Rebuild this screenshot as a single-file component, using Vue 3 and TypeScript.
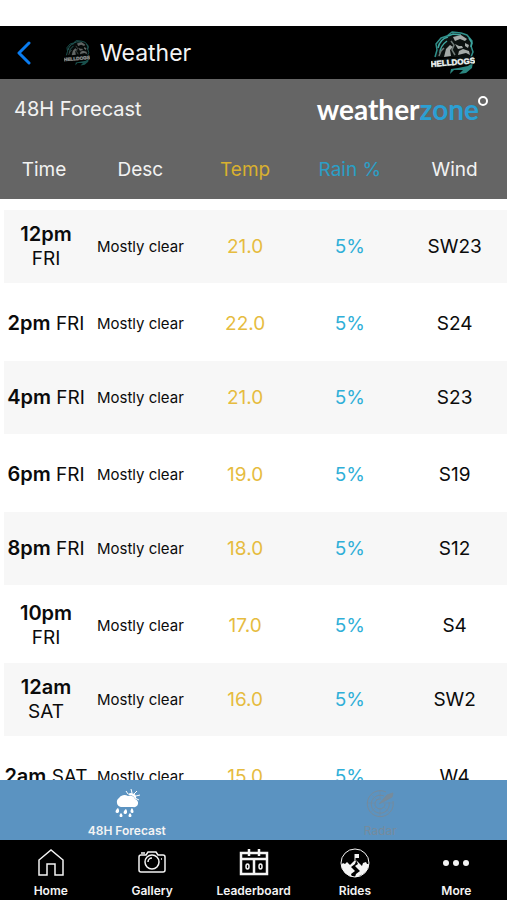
<script setup lang="ts">
import { defineComponent, h } from 'vue'

interface Forecast {
  hour: string
  day: string
  desc: string
  temp: string
  rain: string
  wind: string
}

const forecasts: Forecast[] = [
  { hour: '12pm', day: 'FRI', desc: 'Mostly clear', temp: '21.0', rain: '5%', wind: 'SW23' },
  { hour: '2pm', day: 'FRI', desc: 'Mostly clear', temp: '22.0', rain: '5%', wind: 'S24' },
  { hour: '4pm', day: 'FRI', desc: 'Mostly clear', temp: '21.0', rain: '5%', wind: 'S23' },
  { hour: '6pm', day: 'FRI', desc: 'Mostly clear', temp: '19.0', rain: '5%', wind: 'S19' },
  { hour: '8pm', day: 'FRI', desc: 'Mostly clear', temp: '18.0', rain: '5%', wind: 'S12' },
  { hour: '10pm', day: 'FRI', desc: 'Mostly clear', temp: '17.0', rain: '5%', wind: 'S4' },
  { hour: '12am', day: 'SAT', desc: 'Mostly clear', temp: '16.0', rain: '5%', wind: 'SW2' },
  { hour: '2am', day: 'SAT', desc: 'Mostly clear', temp: '15.0', rain: '5%', wind: 'W4' },
]

// Team crest, used at two sizes in the header.
const TeamCrest = defineComponent({
  setup() {
    return () =>
      h('svg', { viewBox: '0 0 44 44', role: 'img', 'aria-label': 'Helldogs' }, [
        h('path', {
          d: 'M4 26 6 19l-1-6 5-6 6-2 5-4 9 1 6 2 5 6-1 5 2 6-2 5',
          fill: '#0b1110',
          stroke: '#2f8f8a',
          'stroke-width': 1.5,
          'stroke-linejoin': 'round',
        }),
        h('path', {
          d: 'M7 17q2-9 10-11M9 22q0-7 7-12M17 5l5-2 8 1M38 7l3 5-1 4',
          fill: 'none',
          stroke: '#3fa6a0',
          'stroke-width': 1.5,
        }),
        h('path', {
          d: 'M22 6l8-2 6 4-2 2-5-2-5 2zM13 26l2-8 4-4 3 2-3 3 1 6zM24 13l4 2 3 0 1 2-5 1zM34 12l4 2-1 3-3-2zM28 20l4-2 6 2 1 4-4-2-4 1-4 1z',
          fill: '#a4aaa8',
        }),
        h('path', {
          d: 'M20 10l3 4-2 5 3 5M8 25l2-5 3-3',
          fill: 'none',
          stroke: '#6f7a77',
          'stroke-width': 1.5,
        }),
        h('path', { d: 'M27 37l10-2 5-4-1 6-6 5-7 1 4-4-9 0-4 4 1-5z', fill: '#2a857f' }),
        h('path', { d: 'M0 29l43-4 1 8-43 4z', fill: '#0d1514' }),
        h(
          'text',
          {
            x: 0,
            y: 36,
            transform: 'rotate(-5 0 36)',
            'font-family': 'Liberation Sans, sans-serif',
            'font-size': 8,
            'font-weight': 700,
            fill: '#f1f6f4',
            stroke: '#f1f6f4',
            'stroke-width': 0.4,
          },
          'HELLDOGS',
        ),
      ])
  },
})
</script>

<template>
  <div class="screen">
    <header class="topbar">
      <button class="back" type="button" aria-label="Back">
        <svg viewBox="0 0 16 24"><path d="M13 2 3 12l10 10" /></svg>
      </button>
      <TeamCrest class="crest-small" />
      <h1>Weather</h1>
      <TeamCrest class="crest" />
    </header>

    <section class="banner">
      <h2>48H Forecast</h2>
      <p class="brand">
        weather<span>zone</span>
        <svg viewBox="0 0 12 12" aria-hidden="true"><circle cx="6" cy="6" r="4" /></svg>
      </p>
    </section>

    <main class="list">
      <table>
        <colgroup>
          <col class="col-time" />
          <col /><col /><col /><col />
        </colgroup>
        <thead>
          <tr>
            <th scope="col">Time</th>
            <th scope="col">Desc</th>
            <th scope="col" class="temp">Temp</th>
            <th scope="col" class="rain">Rain %</th>
            <th scope="col">Wind</th>
          </tr>
        </thead>
        <tbody>
          <tr v-for="row in forecasts" :key="row.hour + row.day">
            <td class="time"><strong>{{ row.hour }}</strong> {{ row.day }}</td>
            <td class="desc">{{ row.desc }}</td>
            <td class="temp">{{ row.temp }}</td>
            <td class="rain">{{ row.rain }}</td>
            <td>{{ row.wind }}</td>
          </tr>
        </tbody>
      </table>
    </main>

    <nav class="tabs" aria-label="Weather views">
      <a href="#forecast" aria-current="page">
        <svg viewBox="0 0 30 30" fill="#fff">
          <path d="M9 19a5 5 0 0 1-2-9 6 5 0 0 1 9-2 5 5 0 0 1 7 3 4 4 0 0 1-2 8z" />
          <path d="M16 6a5 4 0 0 1 8 4l-1 1a6 6 0 0 0-6-4z" />
          <path d="m19 1 1 4M14 3l2 3M25 3l-3 3M28 7l-4 1M27 12l-4-2" stroke="#fff" stroke-width="1" />
          <path d="M6 20c-3 2-3 5-1 5s3-2 1-5zM14 21c-3 2-3 5-1 5s3-2 1-5zM20 20c-2 2-2 5 0 5s2-2 0-5zM9 25c-2 2-2 4 0 4s2-2 0-4zM18 25c-2 2-2 4 0 4s2-2 0-4z" />
        </svg>
        <span>48H Forecast</span>
      </a>
      <a href="#radar" class="dim">
        <svg viewBox="0 0 30 30" fill="none" stroke="currentColor">
          <path d="M21 4a13 13 0 1 0 7 9M19 8a9 9 0 1 0 5 6M16 11a5 5 0 1 0 4 5" />
          <path d="M2 15h8M15 20v8M15 2v8M6 6l6 6M6 24l5-5M24 24l-5-5M18 15h10" stroke-width="0.500" />
          <path d="m14 16 8-9 6-2-1 4z" fill="currentColor" />
        </svg>
        <span>Radar</span>
      </a>
    </nav>

    <nav class="bottom" aria-label="Main">
      <a href="#home">
        <svg viewBox="0 0 30 30"><path d="M3 27V12L15 2l12 10v15h-8V16h-8v11z" /></svg>
        <span>Home</span>
      </a>
      <a href="#gallery">
        <svg viewBox="0 0 30 30">
          <path d="M4 7h5l2-3h8l2 3h5q2 0 2 2v13q0 2-2 2H4q-2 0-2-2V9q0-2 2-2zM4 5h4" />
          <circle cx="15" cy="14" r="7" />
          <path d="M11 14a4 4 0 0 1 4-4M24 11h1" />
        </svg>
        <span>Gallery</span>
      </a>
      <a href="#leaderboard">
        <svg viewBox="0 0 30 30">
          <path d="M2 5h26v21H2zM2 11h26M15 11v15M10 1v7M20 1v7" stroke-width="2.500" />
          <ellipse cx="8.500" cy="18.500" rx="1.500" ry="2.500" /><ellipse cx="21.500" cy="18.500" rx="1.500" ry="2.500" />
        </svg>
        <span>Leaderboard</span>
      </a>
      <a href="#rides">
        <svg viewBox="0 0 30 30">
          <circle cx="15" cy="15" r="14" stroke-width="1" />
          <path class="solid" d="M1 17l2-2 2 1 2-2 3 3 5-5 1 1-1 3-4 3 4 4-4 3 1 3q-9-3-11-12zM16 12l6 6 1-3 3-1 1 2 2 0q-1 7-6 10l-6 3h-2l1-3 4-3-5-5 3-2z" />
          <path d="M15 12V6" stroke-width="1" /><path class="solid" d="M15 6h4v4h-4z" />
        </svg>
        <span>Rides</span>
      </a>
      <a href="#more">
        <svg viewBox="0 0 30 30">
          <g class="solid"><circle cx="5" cy="15" r="3" /><circle cx="15" cy="15" r="3" /><circle cx="25" cy="15" r="3" /></g>
        </svg>
        <span>More</span>
      </a>
    </nav>
  </div>
</template>

<style>
html,
body,
#app {
  height: 100%;
}
</style>

<style scoped>
.screen {
  display: flex;
  flex-direction: column;
  height: 100%;
  padding-top: 26px;
  box-sizing: border-box;
  overflow: hidden;
  background: #fff;
  color: #0b0b0b;
  font-family: Inter, "Liberation Sans", sans-serif;
  font-size: 19px;
}

h1,
h2,
p {
  margin: 0;
  font-weight: 400;
}

.topbar {
  display: flex;
  align-items: center;
  flex: none;
  height: 53px;
  padding: 0 32px 0 16px;
  background: #000;
  color: #f4f4f4;
}

.back {
  display: flex;
  padding: 0;
  border: 0;
  background: none;
}

.back svg {
  width: 16px;
  height: 24px;
  fill: none;
  stroke: #0a7cf0;
  stroke-width: 3;
  stroke-linecap: round;
  stroke-linejoin: round;
}

.crest-small {
  width: 26px;
  height: 26px;
  margin: 0 10px 0 32px;
  opacity: 0.6;
}

h1 {
  flex: 1;
  font-size: 23px;
}

.crest {
  width: 44px;
  height: 44px;
}

.banner {
  display: flex;
  align-items: center;
  justify-content: space-between;
  flex: none;
  height: 60px;
  padding: 0 18px 0 14px;
  background: #656565;
  color: #f2f2f2;
}

h2 {
  font-size: 20px;
  line-height: 24px;
}

.brand {
  display: flex;
  font-family: Lato, "Open Sans", sans-serif;
  font-size: 28px;
  font-weight: 700;
  line-height: 32px;
  color: #fff;
}

.brand span {
  color: #2b9fd3;
}

.brand svg {
  width: 12px;
  height: 12px;
  margin: 2px 0 0 -2px;
  fill: none;
  stroke: #fff;
  stroke-width: 2;
}

.list {
  flex: 1;
  min-height: 0;
  overflow: hidden;
}

table {
  width: 100%;
  table-layout: fixed;
  border-spacing: 0;
}

.col-time {
  width: 88px;
}

th {
  height: 60px;
  padding: 0;
  border-bottom: 11px solid #fff;
  background: #656565;
  background-clip: padding-box;
  color: #f2f2f2;
  font-weight: 400;
}

td {
  height: 73px;
  padding: 0;
  border-bottom: 3px solid #fff;
  text-align: center;
  line-height: 24px;
}

tbody tr:nth-child(odd) td {
  background: #f7f7f7;
}

/* The white rows carry no divider below them, so they sit slightly shorter. */
tbody tr:nth-child(even) td {
  height: 75px;
  border-bottom: 0;
}

td.time {
  border-left: 4px solid #fff;
}

.time strong {
  font-size: 20px;
  font-weight: 600;
}

.desc {
  font-size: 15px;
}

th.temp {
  color: #d9b02f;
}

td.temp {
  color: #e6bc3f;
}

th.rain {
  color: #2b9fc6;
}

td.rain {
  color: #2fafd8;
}

.tabs,
.bottom {
  display: flex;
  flex: none;
  height: 60px;
}

.tabs {
  background: #5b93c1;
}

.bottom {
  background: #000;
}

.tabs a,
.bottom a {
  display: flex;
  flex: 1 1 0;
  min-width: 0;
  flex-direction: column;
  align-items: center;
  justify-content: flex-end;
  gap: 4px;
  color: #f4f4f4;
  font-size: 12px;
  font-weight: 600;
  line-height: 18px;
  text-decoration: none;
}

.tabs svg,
.bottom svg {
  width: 30px;
  height: 30px;
}

.tabs a.dim {
  color: #768b9c;
}

.tabs a.dim span {
  font-weight: 400;
}

.bottom svg {
  fill: none;
  stroke: #f4f4f4;
  stroke-width: 1.500;
}

.bottom .solid {
  fill: #f4f4f4;
  stroke: none;
}
</style>
